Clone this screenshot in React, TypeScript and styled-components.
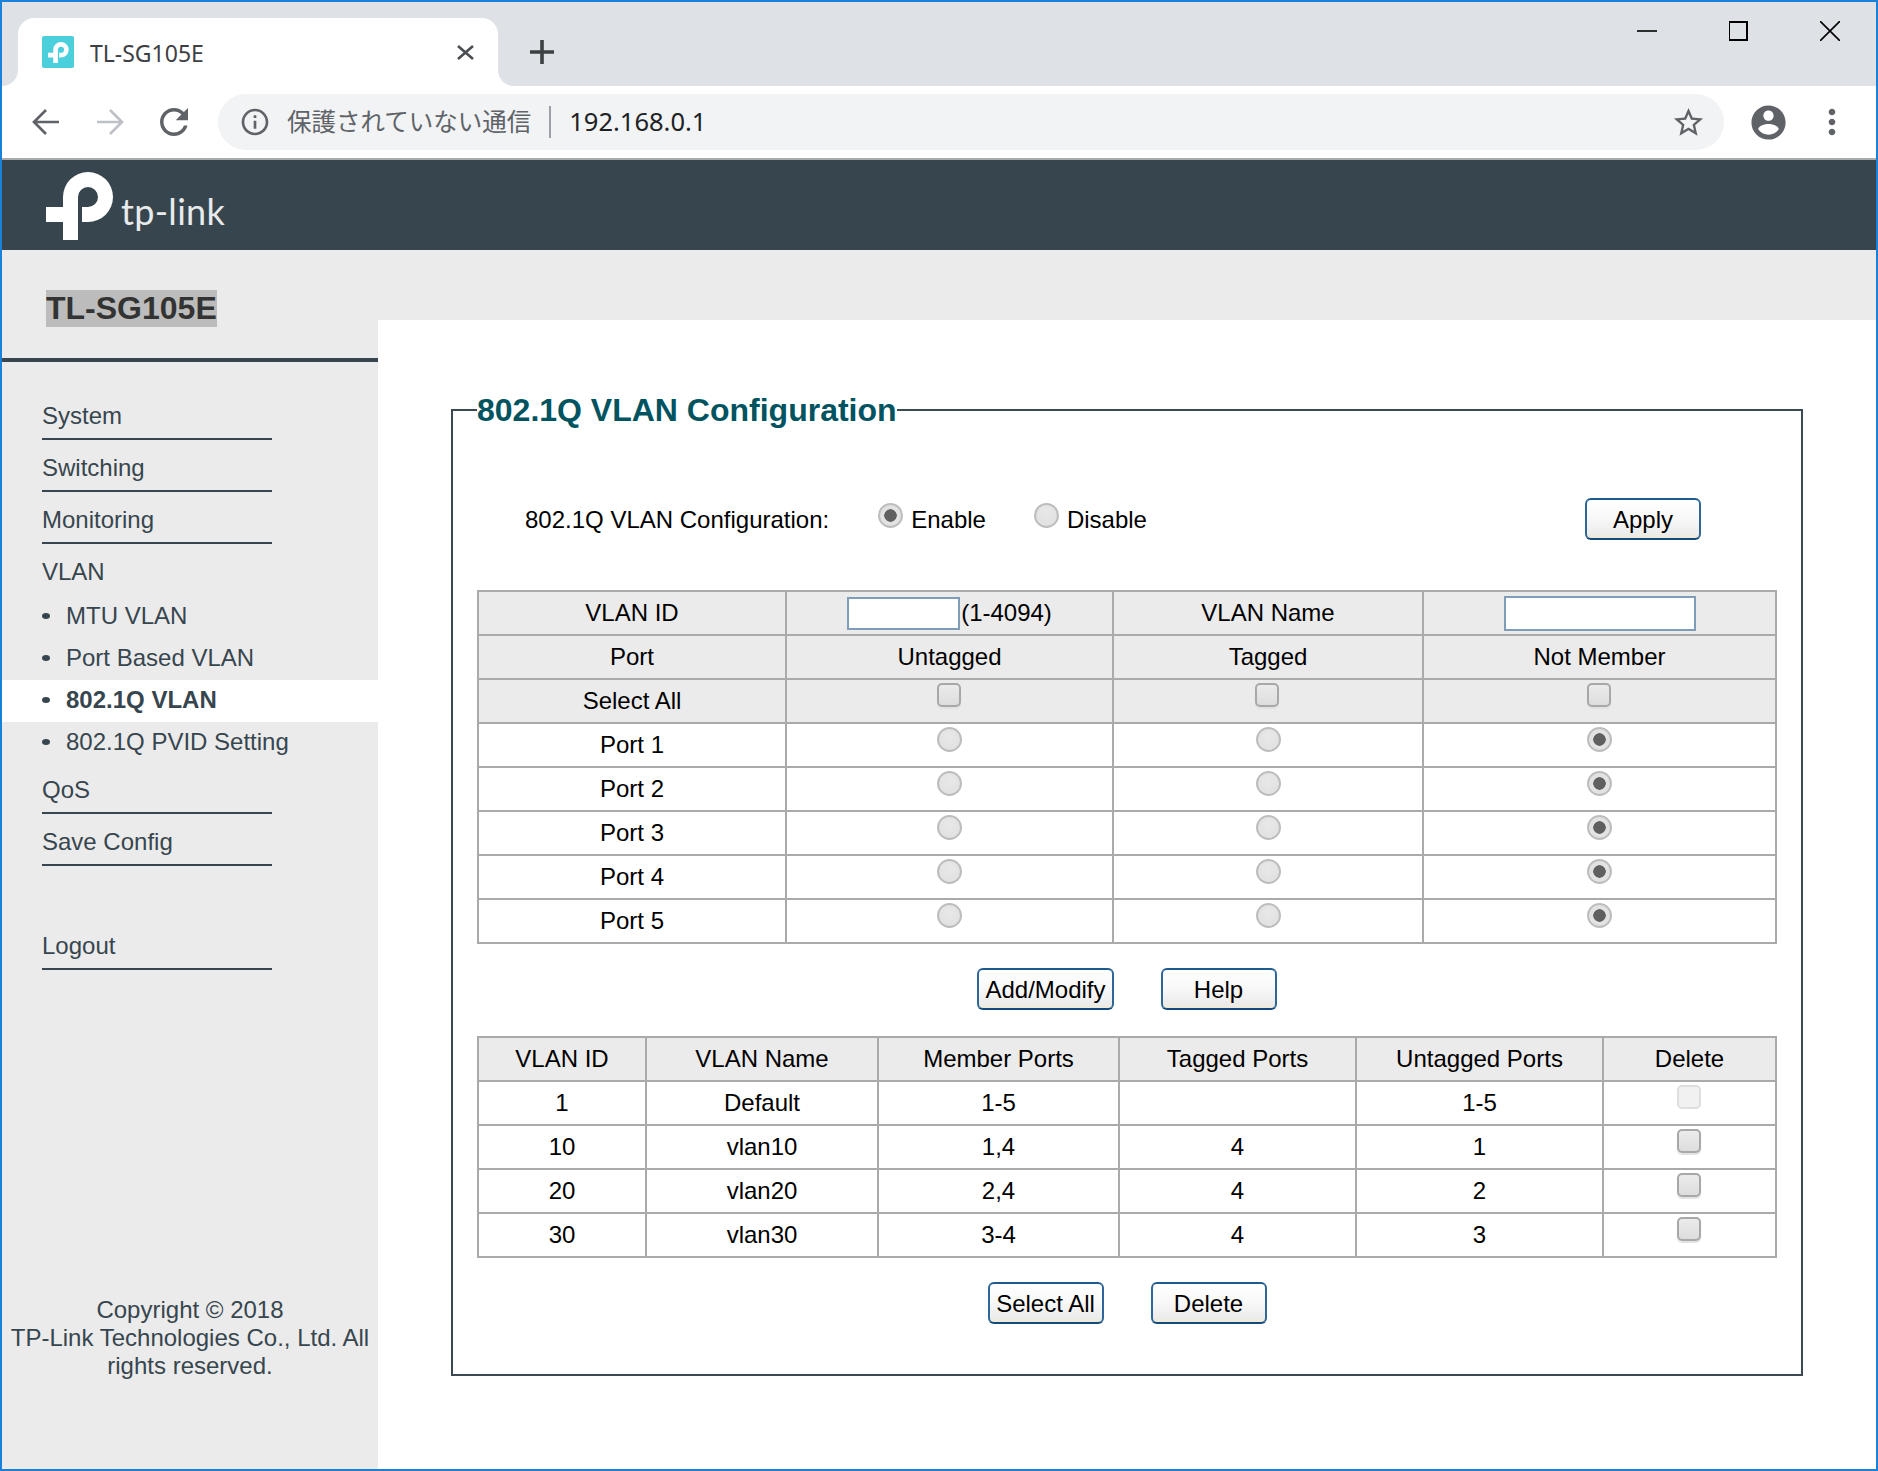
import React from "react";
import styled, { createGlobalStyle } from "styled-components";

const Global = createGlobalStyle`
  html, body { margin: 0; padding: 0; background: #fff; }
  body { font-family: "Liberation Sans", Arial, sans-serif; }
  #root { width: 1878px; height: 1471px; }
  * { box-sizing: border-box; }
`;

const Win = styled.div`
  width: 1878px;
  height: 1471px;
  border: 2px solid #1a80d8;
  display: flex;
  flex-direction: column;
  overflow: hidden;
  background: #fff;
`;

/* ---------- browser chrome ---------- */
const TabStrip = styled.div`
  height: 84px;
  flex: none;
  background: #dee1e6;
  display: flex;
  align-items: flex-end;
`;
const Tab = styled.div`
  position: relative;
  width: 480px;
  height: 68px;
  margin-left: 16px;
  background: #fff;
  border-radius: 16px 16px 0 0;
  display: flex;
  align-items: center;
  padding: 0 24px 0 24px;
  &::before, &::after {
    content: "";
    position: absolute;
    bottom: 0;
    width: 16px;
    height: 16px;
  }
  &::before {
    left: -16px;
    background: radial-gradient(circle at 0 0, transparent 15.5px, #fff 16.5px);
  }
  &::after {
    right: -16px;
    background: radial-gradient(circle at 100% 0, transparent 15.5px, #fff 16.5px);
  }
`;
const Favicon = styled.div`
  width: 32px;
  height: 32px;
  flex: none;
  background: #4ccfdc;
  border-radius: 2px;
  display: flex;
  align-items: center;
  justify-content: center;
  svg { display: block; }
`;
const TabTitle = styled.span`
  margin: 2px 0 0 16px;
  font-family: "Noto Sans", sans-serif;
  font-size: 23px;
  color: #3c4043;
  white-space: nowrap;
`;
const TabClose = styled.svg`
  margin-left: auto;
  margin-right: 0;
  flex: none;
`;
const NewTab = styled.svg`
  margin: 0 0 22px 32px;
  flex: none;
`;
const WinControls = styled.div`
  margin-left: auto;
  align-self: flex-start;
  display: flex;
`;
const WinButton = styled.div`
  width: 91.5px;
  height: 58px;
  display: flex;
  align-items: center;
  justify-content: center;
`;

const Toolbar = styled.div`
  height: 74px;
  flex: none;
  background: #fff;
  border-bottom: 2px solid #a8abac;
  display: flex;
  align-items: center;
  padding: 0 12px 0 12px;
`;
const ToolIcon = styled.div`
  width: 64px;
  height: 56px;
  flex: none;
  display: flex;
  align-items: center;
  justify-content: center;
`;
const Omnibox = styled.div`
  flex: 1;
  height: 56px;
  margin: 0 12px 0 12px;
  border-radius: 28px;
  background: #f1f3f4;
  display: flex;
  align-items: center;
  padding: 0 18px 0 21px;
`;
const Insecure = styled.span`
  margin: 0 0 3px 16px;
  font-family: "Noto Sans CJK JP", "Noto Sans", sans-serif;
  font-size: 24.5px;
  color: #5f6368;
  white-space: nowrap;
`;
const Separator = styled.span`
  width: 2px;
  height: 32px;
  margin: 0 18px 0 18px;
  background: #9aa0a6;
  flex: none;
`;
const Address = styled.span`
  margin-bottom: 2px;
  font-family: "Noto Sans", sans-serif;
  font-size: 25.5px;
  color: #202124;
`;
const Star = styled.svg`
  margin-left: auto;
  flex: none;
`;

/* ---------- header ---------- */
const Header = styled.header`
  height: 90px;
  flex: none;
  background: #37464e;
  display: flex;
  align-items: center;
  padding: 2px 0 0 44px;
`;
const Wordmark = styled.span`
  margin: 10px 0 0 7px;
  font-family: Lato, "Noto Sans", sans-serif;
  font-weight: 400;
  font-size: 36px;
  letter-spacing: 0.3px;
  color: #e8eaeb;
`;

/* ---------- page ---------- */
const Body = styled.div`
  flex: 1;
  min-height: 0;
  display: flex;
`;
const Sidebar = styled.aside`
  width: 376px;
  flex: none;
  background: #ebebeb;
  display: flex;
  flex-direction: column;
`;
const TitleBlock = styled.div`
  height: 112px;
  flex: none;
  border-bottom: 4px solid #37464e;
  padding: 40px 0 0 44px;
`;
const Title = styled.span`
  display: inline-block;
  font-size: 32px;
  line-height: 37px;
  font-weight: 700;
  color: #333;
  background: #bcbcbc;
`;
const Nav = styled.nav`
  padding-top: 26px;
  display: flex;
  flex-direction: column;
`;
const NavItem = styled.a<{ $plain?: boolean; $gap?: number }>`
  display: block;
  width: 230px;
  margin: ${(p) => 14 + (p.$gap ?? 0)}px 0 0 40px;
  padding-bottom: ${(p) => (p.$plain ? 0 : 8)}px;
  border-bottom: ${(p) => (p.$plain ? "none" : "2px solid #37464e")};
  font-size: 24px;
  line-height: 28px;
  color: #37464e;
`;
const SubList = styled.div`
  margin-top: 10px;
  display: flex;
  flex-direction: column;
`;
const SubItem = styled.a<{ $active?: boolean }>`
  height: 42px;
  padding: 0 0 3px 40px;
  display: flex;
  align-items: center;
  gap: 16px;
  font-size: 24px;
  line-height: 39px;
  color: #37464e;
  font-weight: ${(p) => (p.$active ? 700 : 400)};
  background: ${(p) => (p.$active ? "#fff" : "transparent")};
  &::before {
    content: "";
    width: 8px;
    height: 6px;
    border-radius: 50%;
    background: #37464e;
    flex: none;
  }
`;
const Copyright = styled.div`
  margin-top: auto;
  padding: 0 6px 89px;
  text-align: center;
  font-size: 24px;
  line-height: 28px;
  color: #37464e;
`;

const Main = styled.main`
  flex: 1;
  min-width: 0;
  display: flex;
  flex-direction: column;
`;
const Band = styled.div`
  height: 70px;
  flex: none;
  background: #ebebeb;
`;
const Panel = styled.fieldset`
  width: 1352px;
  height: 985px;
  margin: 71px 0 0 73px;
  padding: 0 23px 0 24px;
  border: 2px solid #3b4a52;
  min-inline-size: 0;
`;
const Legend = styled.legend`
  padding: 0;
  margin: 0;
  font-size: 32px;
  line-height: 37px;
  font-weight: 700;
  color: #00535f;
  transform: translateY(1px);
`;
const ConfigRow = styled.div`
  margin-top: 70px;
  height: 42px;
  display: flex;
  align-items: center;
  font-size: 24px;
  color: #000;
  padding: 0 77px 0 48px;
`;
const ConfigText = styled.span`
  padding-top: 1px;
`;
const RadioLabel = styled.label<{ $gap: number }>`
  margin-left: ${(p) => p.$gap}px;
  display: flex;
  align-items: center;
  gap: 8px;
`;
const Radio = styled.input.attrs({ type: "radio" })`
  appearance: none;
  display: block;
  width: 25px;
  height: 25px;
  margin: 0;
  border-radius: 50%;
  border: 2px solid #bdbdbd;
  background: radial-gradient(circle at 50% 35%, #e8e8e8, #dfdfdf);
  &:checked {
    background: radial-gradient(circle, #606060 0 5.5px, #6a6a6a 6px, #e2e2e2 6.5px);
  }
`;
const ConfigRadio = styled(Radio)`
  margin-bottom: 8px;
`;
const CellRadio = styled(Radio)`
  margin: 0 auto 11px;
`;
const Check = styled.input.attrs({ type: "checkbox" })`
  appearance: none;
  display: block;
  width: 24px;
  height: 24px;
  margin: 0 auto 12px;
  transform: translateX(-1px);
  border-radius: 5px;
  border: 2px solid #a8a8a8;
  background: linear-gradient(#ebebeb, #dddddd);
  box-shadow: 0 2px 1px #e2e2e2;
  &:disabled {
    border-color: #dedede;
    background: #f1f1f1;
    box-shadow: none;
  }
`;
const Grid = styled.table`
  width: 1298px;
  table-layout: fixed;
  border-collapse: collapse;
  font-size: 24px;
  color: #000;
`;
const Tr = styled.tr<{ $shaded?: boolean }>`
  height: 44px;
  background: ${(p) => (p.$shaded ? "#ebebeb" : "#fff")};
`;
const Td = styled.td`
  padding: 0;
  border: 2px solid #aaa;
  text-align: center;
  vertical-align: middle;
  white-space: nowrap;
`;
const Col = styled.col<{ $w: number }>`
  width: ${(p) => p.$w}px;
`;
const FirstGrid = styled(Grid)`
  margin-top: 50px;
`;
const SecondGrid = styled(Grid)`
  margin-top: 26px;
`;
const FieldLine = styled.div`
  display: flex;
  justify-content: center;
  align-items: center;
  gap: 1px;
`;
const TextField = styled.input.attrs({ type: "text" })<{ $w: number; $h: number }>`
  display: block;
  width: ${(p) => p.$w}px;
  height: ${(p) => p.$h}px;
  padding: 0;
  margin: 0;
  border: 2px solid #7f9db9;
  background: #fff;
  outline: none;
`;
const Actions = styled.div<{ $top: number }>`
  margin-top: ${(p) => p.$top}px;
  display: flex;
  justify-content: center;
  gap: 47px;
  padding-right: 1px;
`;
const Btn = styled.button<{ $push?: boolean }>`
  min-width: 116px;
  height: 42px;
  padding: 1px 6px 0;
  margin-left: ${(p) => (p.$push ? "auto" : "0")};
  border-radius: 6px;
  border: 2px solid #2f6698;
  border-top-color: #1f5a8e;
  border-bottom-color: #124a7c;
  background: linear-gradient(#ffffff 0%, #f9f9f9 45%, #ececec 88%, #efe9d6 100%);
  font-family: "Liberation Sans", Arial, sans-serif;
  font-size: 24px;
  color: #000;
`;

/* ---------- drawings ---------- */
const MARK =
  "M17 35V25A25 25 0 1 1 42 50H36V35H42A10 10 0 1 0 32 25V68H17V50H0V35Z";

const Logo = ({ size, color }: { size: number; color: string }) => (
  <svg width={size} height={size} viewBox="0 0 68 68" style={{ flex: "none" }}>
    <path d={MARK} fill={color} />
  </svg>
);

const Mat = ({ d, size, color }: { d: string; size: number; color: string }) => (
  <svg width={size} height={size} viewBox="0 0 24 24" style={{ flex: "none" }}>
    <path d={d} fill={color} />
  </svg>
);
const Arrow = ({ flip, color }: { flip?: boolean; color: string }) => (
  <svg width="28" height="28" viewBox="0 0 28 28" fill="none" stroke={color} strokeWidth="2.7">
    {flip ? <path d="M1 14H26M14 2L26 14L14 26" /> : <path d="M27 14H2M14 2L2 14L14 26" />}
  </svg>
);

const RELOAD =
  "M17.65 6.35C16.2 4.9 14.21 4 12 4c-4.42 0-7.99 3.58-7.99 8s3.57 8 7.99 8c3.73 0 6.84-2.55 7.73-6h-2.08c-.82 2.33-3.04 4-5.65 4-3.31 0-6-2.69-6-6s2.69-6 6-6c1.66 0 3.14.69 4.22 1.78L13 11h7V4l-2.35 2.35z";
const INFO =
  "M11 7h2v2h-2zm0 4h2v6h-2zm1-9C6.48 2 2 6.48 2 12s4.48 10 10 10 10-4.48 10-10S17.52 2 12 2zm0 18c-4.41 0-8-3.59-8-8s3.59-8 8-8 8 3.59 8 8-3.59 8-8 8z";
const STAR =
  "M22 9.24l-7.19-.62L12 2 9.19 8.63 2 9.24l5.46 4.73L5.82 21 12 17.27 18.18 21l-1.63-7.03L22 9.24zM12 15.4l-3.76 2.27 1-4.28-3.32-2.88 4.38-.38L12 6.1l1.71 4.04 4.38.38-3.32 2.88 1 4.28L12 15.4z";
const ACCOUNT =
  "M12 2C6.48 2 2 6.48 2 12s4.48 10 10 10 10-4.48 10-10S17.52 2 12 2zm0 3c1.66 0 3 1.34 3 3s-1.34 3-3 3-3-1.34-3-3 1.34-3 3-3zm0 14.2c-2.5 0-4.71-1.28-6-3.22.03-1.99 4-3.08 6-3.08 1.99 0 5.97 1.09 6 3.08-1.29 1.94-3.5 3.22-6 3.22z";
const DOTS =
  "M12 8c1.1 0 2-.9 2-2s-.9-2-2-2-2 .9-2 2 .9 2 2 2zm0 2c-1.1 0-2 .9-2 2s.9 2 2 2 2-.9 2-2-.9-2-2-2zm0 6c-1.1 0-2 .9-2 2s.9 2 2 2 2-.9 2-2-.9-2-2-2z";

/* ---------- data ---------- */
const ports = [1, 2, 3, 4, 5];
const vlans = [
  { id: "1", name: "Default", member: "1-5", tagged: "", untagged: "1-5", locked: true },
  { id: "10", name: "vlan10", member: "1,4", tagged: "4", untagged: "1" },
  { id: "20", name: "vlan20", member: "2,4", tagged: "4", untagged: "2" },
  { id: "30", name: "vlan30", member: "3-4", tagged: "4", untagged: "3" },
];
const cols1 = [308, 327, 310, 353];
const cols2 = [168, 232, 241, 237, 247, 173];
const heads2 = ["VLAN ID", "VLAN Name", "Member Ports", "Tagged Ports", "Untagged Ports", "Delete"];

export default function App() {
  return (
    <>
      <Global />
      <Win>
        <TabStrip>
          <Tab>
            <Favicon>
              <Logo size={21} color="#fff" />
            </Favicon>
            <TabTitle>TL-SG105E</TabTitle>
            <TabClose width="17" height="15" viewBox="0 0 17 15" stroke="#4a4d51" strokeWidth="2.6" fill="none">
              <path d="M1 1L16 14M16 1L1 14" />
            </TabClose>
          </Tab>
          <NewTab width="24" height="24" viewBox="0 0 24 24" stroke="#3c4043" strokeWidth="3.6" fill="none">
            <path d="M12 0V24M0 12H24" />
          </NewTab>
          <WinControls>
            <WinButton>
              <svg width="20" height="20" viewBox="0 0 20 20" stroke="#000" strokeWidth="1.6">
                <path d="M0 10H20" />
              </svg>
            </WinButton>
            <WinButton>
              <svg width="20" height="20" viewBox="0 0 20 20" stroke="#000" strokeWidth="2" fill="none">
                <rect x="0" y="1" width="18" height="18" />
              </svg>
            </WinButton>
            <WinButton>
              <svg width="20" height="20" viewBox="0 0 20 20" stroke="#000" strokeWidth="1.6" fill="none">
                <path d="M0 0L20 20M20 0L0 20" />
              </svg>
            </WinButton>
          </WinControls>
        </TabStrip>

        <Toolbar>
          <ToolIcon>
            <Arrow color="#5f6368" />
          </ToolIcon>
          <ToolIcon>
            <Arrow flip color="#bdc1c6" />
          </ToolIcon>
          <ToolIcon>
            <Mat d={RELOAD} size={42} color="#5f6368" />
          </ToolIcon>
          <Omnibox>
            <Mat d={INFO} size={32} color="#5f6368" />
            <Insecure>保護されていない通信</Insecure>
            <Separator />
            <Address>192.168.0.1</Address>
            <Star width="35" height="35" viewBox="0 0 24 24">
              <path d={STAR} fill="#5f6368" />
            </Star>
          </Omnibox>
          <ToolIcon>
            <Mat d={ACCOUNT} size={41} color="#5f6368" />
          </ToolIcon>
          <ToolIcon>
            <Mat d={DOTS} size={40} color="#5f6368" />
          </ToolIcon>
        </Toolbar>

        <Header>
          <Logo size={68} color="#fff" />
          <Wordmark>tp-link</Wordmark>
        </Header>

        <Body>
          <Sidebar>
            <TitleBlock>
              <Title>TL-SG105E</Title>
            </TitleBlock>
            <Nav>
              <NavItem>System</NavItem>
              <NavItem>Switching</NavItem>
              <NavItem>Monitoring</NavItem>
              <NavItem $plain>VLAN</NavItem>
              <SubList>
                <SubItem>MTU VLAN</SubItem>
                <SubItem>Port Based VLAN</SubItem>
                <SubItem $active>802.1Q VLAN</SubItem>
                <SubItem>802.1Q PVID Setting</SubItem>
              </SubList>
              <NavItem $gap={-2}>QoS</NavItem>
              <NavItem>Save Config</NavItem>
              <NavItem $gap={52}>Logout</NavItem>
            </Nav>
            <Copyright>
              Copyright © 2018
              <br />
              TP-Link Technologies Co., Ltd. All rights reserved.
            </Copyright>
          </Sidebar>

          <Main>
            <Band />
            <Panel>
              <Legend>802.1Q VLAN Configuration</Legend>
              <ConfigRow>
                <ConfigText>802.1Q VLAN Configuration:</ConfigText>
                <RadioLabel $gap={49}>
                  <ConfigRadio name="state" defaultChecked />
                  <ConfigText>Enable</ConfigText>
                </RadioLabel>
                <RadioLabel $gap={48}>
                  <ConfigRadio name="state" />
                  <ConfigText>Disable</ConfigText>
                </RadioLabel>
                <Btn $push>Apply</Btn>
              </ConfigRow>

              <FirstGrid>
                <colgroup>
                  {cols1.map((w, i) => (
                    <Col key={i} $w={w} />
                  ))}
                </colgroup>
                <tbody>
                  <Tr $shaded>
                    <Td>VLAN ID</Td>
                    <Td>
                      <FieldLine>
                        <TextField $w={113} $h={33} />
                        (1-4094)
                      </FieldLine>
                    </Td>
                    <Td>VLAN Name</Td>
                    <Td>
                      <FieldLine>
                        <TextField $w={192} $h={35} />
                      </FieldLine>
                    </Td>
                  </Tr>
                  <Tr $shaded>
                    <Td>Port</Td>
                    <Td>Untagged</Td>
                    <Td>Tagged</Td>
                    <Td>Not Member</Td>
                  </Tr>
                  <Tr $shaded>
                    <Td>Select All</Td>
                    <Td><Check /></Td>
                    <Td><Check /></Td>
                    <Td><Check /></Td>
                  </Tr>
                  {ports.map((p) => (
                    <Tr key={p}>
                      <Td>Port {p}</Td>
                      <Td><CellRadio name={`port${p}`} /></Td>
                      <Td><CellRadio name={`port${p}`} /></Td>
                      <Td><CellRadio name={`port${p}`} defaultChecked /></Td>
                    </Tr>
                  ))}
                </tbody>
              </FirstGrid>

              <Actions $top={24}>
                <Btn>Add/Modify</Btn>
                <Btn>Help</Btn>
              </Actions>

              <SecondGrid>
                <colgroup>
                  {cols2.map((w, i) => (
                    <Col key={i} $w={w} />
                  ))}
                </colgroup>
                <tbody>
                  <Tr $shaded>
                    {heads2.map((h) => (
                      <Td key={h}>{h}</Td>
                    ))}
                  </Tr>
                  {vlans.map((v) => (
                    <Tr key={v.id}>
                      <Td>{v.id}</Td>
                      <Td>{v.name}</Td>
                      <Td>{v.member}</Td>
                      <Td>{v.tagged}</Td>
                      <Td>{v.untagged}</Td>
                      <Td><Check disabled={v.locked} /></Td>
                    </Tr>
                  ))}
                </tbody>
              </SecondGrid>

              <Actions $top={24}>
                <Btn>Select All</Btn>
                <Btn>Delete</Btn>
              </Actions>
            </Panel>
          </Main>
        </Body>
      </Win>
    </>
  );
}
